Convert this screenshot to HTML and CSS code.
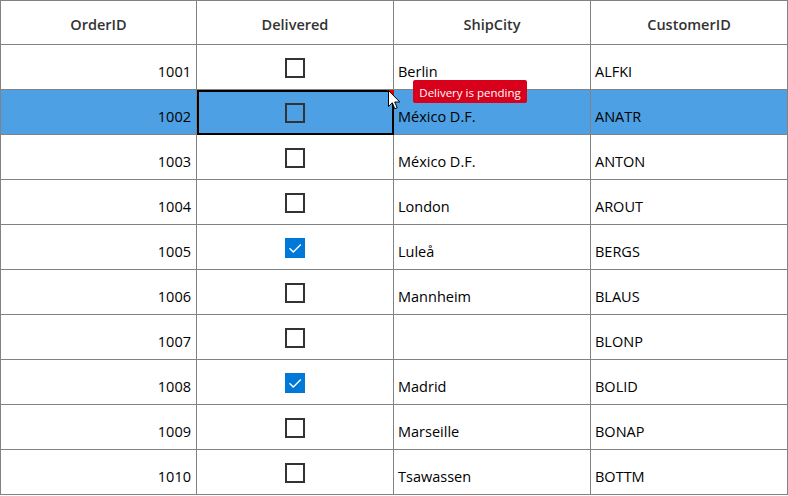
FILE: index.html
```html
<!DOCTYPE html>
<html>
<head>
<meta charset="utf-8">
<link rel="stylesheet" href="styles.css">
</head>
<body>
<div class="grid">
  <div class="hd">OrderID</div><div class="hd">Delivered</div><div class="hd">ShipCity</div><div class="hd">CustomerID</div>

  <div class="c num">1001</div><div class="c chk"><span class="box"></span></div><div class="c">Berlin</div><div class="c">ALFKI</div>
  <div class="c num sel">1002</div><div class="c chk sel cur"><span class="box"></span><span class="flag"></span></div><div class="c sel">México D.F.</div><div class="c sel">ANATR</div>
  <div class="c num">1003</div><div class="c chk"><span class="box"></span></div><div class="c">México D.F.</div><div class="c">ANTON</div>
  <div class="c num">1004</div><div class="c chk"><span class="box"></span></div><div class="c">London</div><div class="c">AROUT</div>
  <div class="c num">1005</div><div class="c chk"><span class="box on"><svg viewBox="0 0 20 20" width="20" height="20"><path d="M4.5 10.2 L8.3 14 L15.8 6.5" fill="none" stroke="#fff" stroke-width="1.4"/></svg></span></div><div class="c">Luleå</div><div class="c">BERGS</div>
  <div class="c num">1006</div><div class="c chk"><span class="box"></span></div><div class="c">Mannheim</div><div class="c">BLAUS</div>
  <div class="c num">1007</div><div class="c chk"><span class="box"></span></div><div class="c"></div><div class="c">BLONP</div>
  <div class="c num">1008</div><div class="c chk"><span class="box on"><svg viewBox="0 0 20 20" width="20" height="20"><path d="M4.5 10.2 L8.3 14 L15.8 6.5" fill="none" stroke="#fff" stroke-width="1.4"/></svg></span></div><div class="c">Madrid</div><div class="c">BOLID</div>
  <div class="c num">1009</div><div class="c chk"><span class="box"></span></div><div class="c">Marseille</div><div class="c">BONAP</div>
  <div class="c num">1010</div><div class="c chk"><span class="box"></span></div><div class="c">Tsawassen</div><div class="c">BOTTM</div>
</div>
<div class="tip">Delivery is pending</div>
<svg class="cursor" width="14" height="22" viewBox="0 0 14 22"><path d="M0.5 0.5 L0.5 16.5 L4.3 12.8 L6.8 18.8 L9.2 17.8 L6.7 12 L11.8 12 Z" fill="#fff" stroke="#000" stroke-width="1" stroke-linejoin="miter"/></svg>
</body>
</html>
```
FILE: styles.css
```css
html, body {
  margin: 0;
  padding: 0;
  background: #fff;
}
body {
  position: relative;
  width: 788px;
  height: 496px;
  overflow: hidden;
  font-family: "Open Sans", "Noto Sans", sans-serif;
  font-size: 14.5px;
  color: #000;
}
.grid {
  display: grid;
  grid-template-columns: 196px 197px 197px 197px;
  grid-template-rows: 44px repeat(10, 45px);
  border-left: 1px solid #828282;
  border-top: 1px solid #828282;
  width: 788px;
  box-sizing: border-box;
}
.grid > div {
  border-right: 1px solid #828282;
  border-bottom: 1px solid #828282;
}
.hd {
  display: flex;
  align-items: center;
  justify-content: center;
  padding-top: 3px;
  box-sizing: border-box;
  font-weight: 600;
  color: #333;
  font-size: 14.5px;
}
.c {
  display: flex;
  align-items: center;
  padding: 8px 5px 0 4px;
  box-sizing: border-box;
  position: relative;
}
.num {
  justify-content: flex-end;
}
.chk {
  justify-content: center;
  padding-top: 2px;
}
.box {
  width: 20px;
  height: 20px;
  box-sizing: border-box;
  border: 2px solid #333;
  display: block;
}
.box.on {
  border: none;
  background: #0078d7;
}
.box svg {
  display: block;
}
.sel {
  background: #4da0e3;
}
.cur {
  outline: 2px solid #000;
  outline-offset: -2px;
}
.flag {
  position: absolute;
  top: 0;
  right: -1px;
  width: 0;
  height: 0;
  border-top: 7px solid #e00000;
  border-left: 7px solid transparent;
}
.tip {
  position: absolute;
  left: 413px;
  top: 80px;
  width: 114px;
  height: 23px;
  background: #d9001b;
  color: #fff;
  font-size: 11.5px;
  border-radius: 2px;
  display: flex;
  align-items: center;
  justify-content: center;
  box-sizing: border-box;
  padding-top: 1px;
}
.cursor {
  position: absolute;
  left: 388px;
  top: 90px;
}
```
